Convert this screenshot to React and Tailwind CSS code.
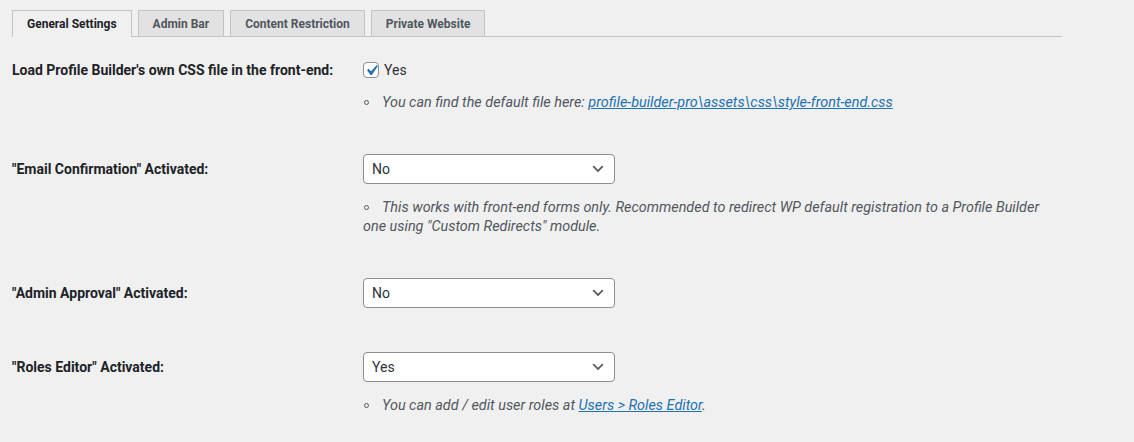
import React from 'react';

const font = { fontFamily: 'Roboto, "Liberation Sans", sans-serif' };

const tabs = [
  { label: 'General Settings', active: true },
  { label: 'Admin Bar' },
  { label: 'Content Restriction' },
  { label: 'Private Website' },
];

const Chevron = () => (
  <svg viewBox="0 0 20 20" className="w-4 h-4" fill="#50575e">
    <path d="M5 6l5 5 5-5 2 1-7 7-7-7 2-1z" />
  </svg>
);

const Select = ({ value }) => (
  <div className="w-[252px] h-[30px] flex items-center justify-between pl-2 pr-2 bg-white border border-[#8c8f94] rounded-[4px] text-[14px] text-[#2c3338]">
    <span>{value}</span>
    <Chevron />
  </div>
);

const Bullet = () => (
  <span className="inline-block w-[5px] h-[5px] rounded-full border border-[#50575e] align-middle mr-[13px] ml-[1px] mb-[2px]" />
);

const Description = ({ children }) => (
  <p className="text-[14.4px] leading-[19px] italic text-[#50575e] w-[690px]">
    <Bullet />
    {children}
  </p>
);

const Row = ({ label, children, className = '' }) => (
  <div className={`flex items-start ${className}`}>
    <div className="w-[351px] shrink-0 pt-[6px] text-[14px] font-bold text-[#1d2327] leading-[18px]">{label}</div>
    <div>{children}</div>
  </div>
);

export default function App() {
  return (
    <div className="min-h-screen bg-[#f0f0f1] px-3" style={font}>
      {/* tabs */}
      <div className="pt-[10px] w-[1050px] border-b border-[#c3c4c7] flex gap-[6px]">
        {tabs.map((t) => (
          <div
            key={t.label}
            className={`-mb-px px-[14px] flex items-center text-[12px] font-bold border border-[#c3c4c7] border-b-0 ${
              t.active ? 'bg-[#f0f0f1] text-[#1d2327] h-[27px]' : 'bg-[#e2e2e3] text-[#50575e] mb-0 h-[26px]'
            }`}
          >
            {t.label}
          </div>
        ))}
      </div>

      <Row label="Load Profile Builder's own CSS file in the front-end:" className="mt-[18px]">
        <div className="flex items-center gap-[5px] h-[30px]">
          <span className="w-4 h-4 bg-white border border-[#8c8f94] rounded-[4px] flex items-center justify-center overflow-visible">
            <svg viewBox="0 0 20 20" className="w-[21px] h-[21px] shrink-0 -m-[3px]" fill="#2271b1">
              <path d="M14.83 4.89l1.34.94-5.81 8.38H9.02L5.78 9.67l1.34-1.25 2.57 2.4z" />
            </svg>
          </span>
          <span className="text-[14px] text-[#2c3338]">Yes</span>
        </div>
        <div className="mt-[8px]">
          <Description>
            You can find the default file here:{' '}
            <a href="#" className="text-[#2271b1] underline">profile-builder-pro\assets\css\style-front-end.css</a>
          </Description>
        </div>
      </Row>

      <Row label={'"Email Confirmation" Activated:'} className="mt-[42px]">
        <Select value="No" />
        <div className="mt-[14px]">
          <Description>
            This works with front-end forms only. Recommended to redirect WP default registration to a Profile Builder one using "Custom Redirects" module.
          </Description>
        </div>
      </Row>

      <Row label={'"Admin Approval" Activated:'} className="mt-[42px]">
        <Select value="No" />
      </Row>

      <Row label={'"Roles Editor" Activated:'} className="mt-[44px]">
        <Select value="Yes" />
        <div className="mt-[14px]">
          <Description>
            You can add / edit user roles at{' '}
            <a href="#" className="text-[#2271b1] underline">Users &gt; Roles Editor</a>.
          </Description>
        </div>
      </Row>
    </div>
  );
}
